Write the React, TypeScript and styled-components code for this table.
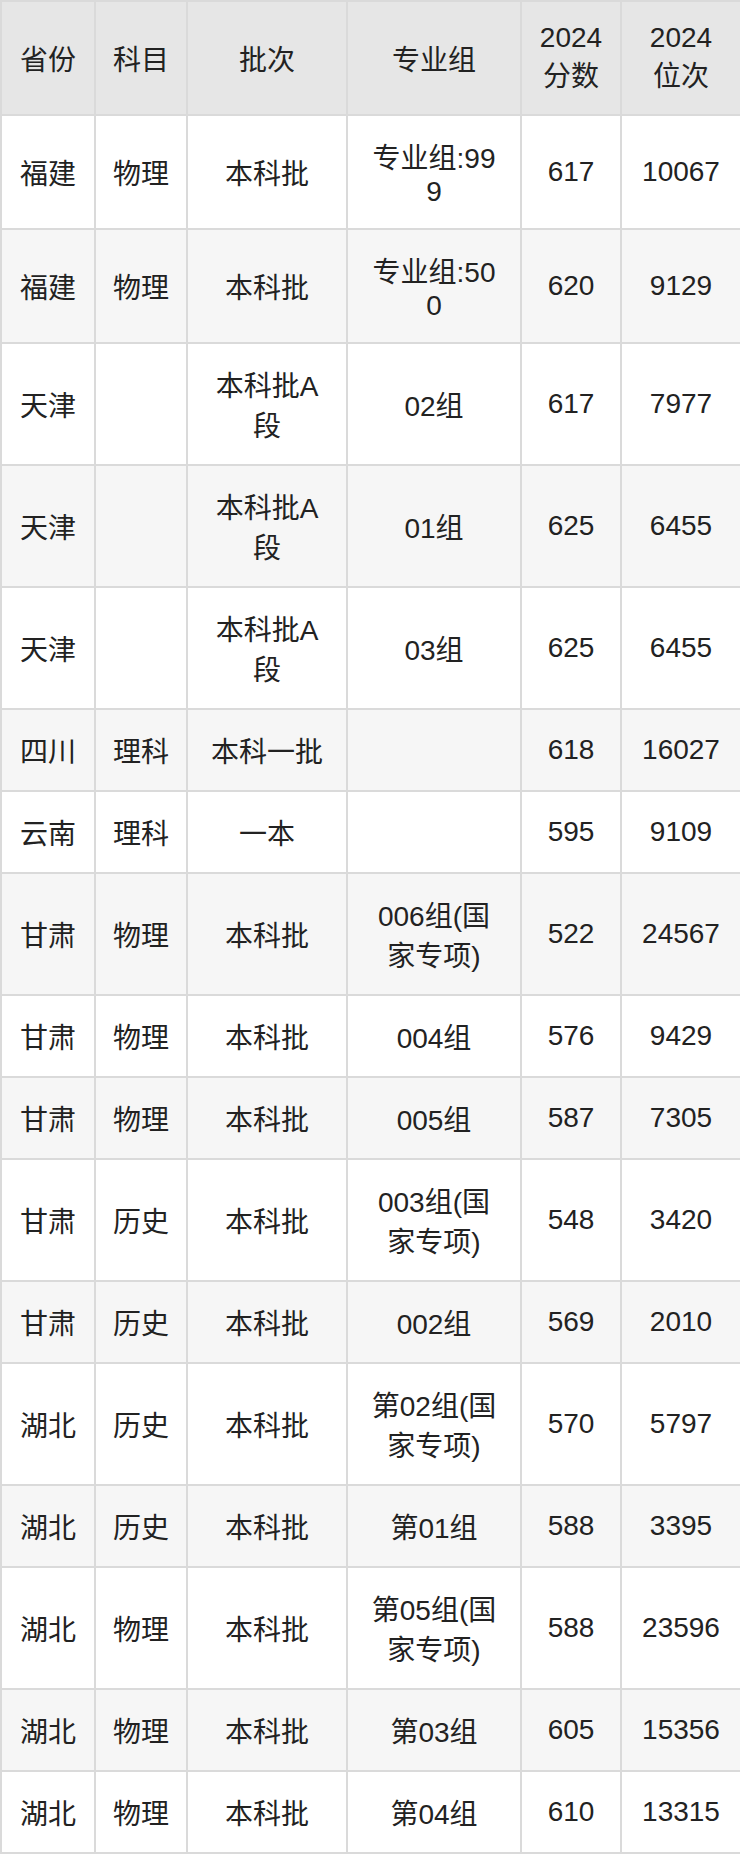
import React from 'react';
import styled, { createGlobalStyle } from 'styled-components';

type Row = [string, string, string, string, string, string];

const rows: Row[] = [
  ['福建', '物理', '本科批', '专业组:999', '617', '10067'],
  ['福建', '物理', '本科批', '专业组:500', '620', '9129'],
  ['天津', '', '本科批A段', '02组', '617', '7977'],
  ['天津', '', '本科批A段', '01组', '625', '6455'],
  ['天津', '', '本科批A段', '03组', '625', '6455'],
  ['四川', '理科', '本科一批', '', '618', '16027'],
  ['云南', '理科', '一本', '', '595', '9109'],
  ['甘肃', '物理', '本科批', '006组(国家专项)', '522', '24567'],
  ['甘肃', '物理', '本科批', '004组', '576', '9429'],
  ['甘肃', '物理', '本科批', '005组', '587', '7305'],
  ['甘肃', '历史', '本科批', '003组(国家专项)', '548', '3420'],
  ['甘肃', '历史', '本科批', '002组', '569', '2010'],
  ['湖北', '历史', '本科批', '第02组(国家专项)', '570', '5797'],
  ['湖北', '历史', '本科批', '第01组', '588', '3395'],
  ['湖北', '物理', '本科批', '第05组(国家专项)', '588', '23596'],
  ['湖北', '物理', '本科批', '第03组', '605', '15356'],
  ['湖北', '物理', '本科批', '第04组', '610', '13315'],
];

const headers = ['省份', '科目', '批次', '专业组', '2024分数', '2024位次'];
const widths = [94, 92, 160, 174, 100, 120];

const App: React.FC = () => {
  return (
    <>
      <GlobalStyle />
      <ScoreTable>
        <colgroup>
          {widths.map((w, i) => (
            <col key={i} style={{ width: w }} />
          ))}
        </colgroup>
        <thead>
          <tr>
            {headers.map((h, i) => (
              <HeadCell key={h} $group={i === 3}>
                {h}
              </HeadCell>
            ))}
          </tr>
        </thead>
        <tbody>
          {rows.map((r, ri) => (
            <BodyRow key={ri} $alt={ri % 2 === 1}>
              {r.map((c, ci) => (
                <Cell key={ci} $group={ci === 3}>
                  {c}
                </Cell>
              ))}
            </BodyRow>
          ))}
        </tbody>
      </ScoreTable>
    </>
  );
};

const GlobalStyle = createGlobalStyle`
  html, body {
    margin: 0;
    padding: 0;
    background: #ffffff;
  }
`;

const ScoreTable = styled.table`
  width: 740px;
  table-layout: fixed;
  border-collapse: collapse;
  border: 2px solid #dadada;
  font-family: 'Liberation Sans', 'Noto Sans CJK SC', sans-serif;
  font-size: 28px;
  color: #222222;
`;

const HeadCell = styled.th<{ $group?: boolean }>`
  background: #e6e6e6;
  border: 2px solid #dadada;
  padding: 20px ${(p) => (p.$group ? '19px' : '17px')};
  font-weight: normal;
  text-align: center;
  vertical-align: middle;
  word-break: break-all;
`;

const BodyRow = styled.tr<{ $alt?: boolean }>`
  background: ${(p) => (p.$alt ? '#f6f6f6' : '#ffffff')};
`;

const Cell = styled.td<{ $group?: boolean }>`
  border: 2px solid #dadada;
  padding: 20px ${(p) => (p.$group ? '19px' : '17px')};
  text-align: center;
  vertical-align: middle;
  word-break: break-all;
`;

export default App;
